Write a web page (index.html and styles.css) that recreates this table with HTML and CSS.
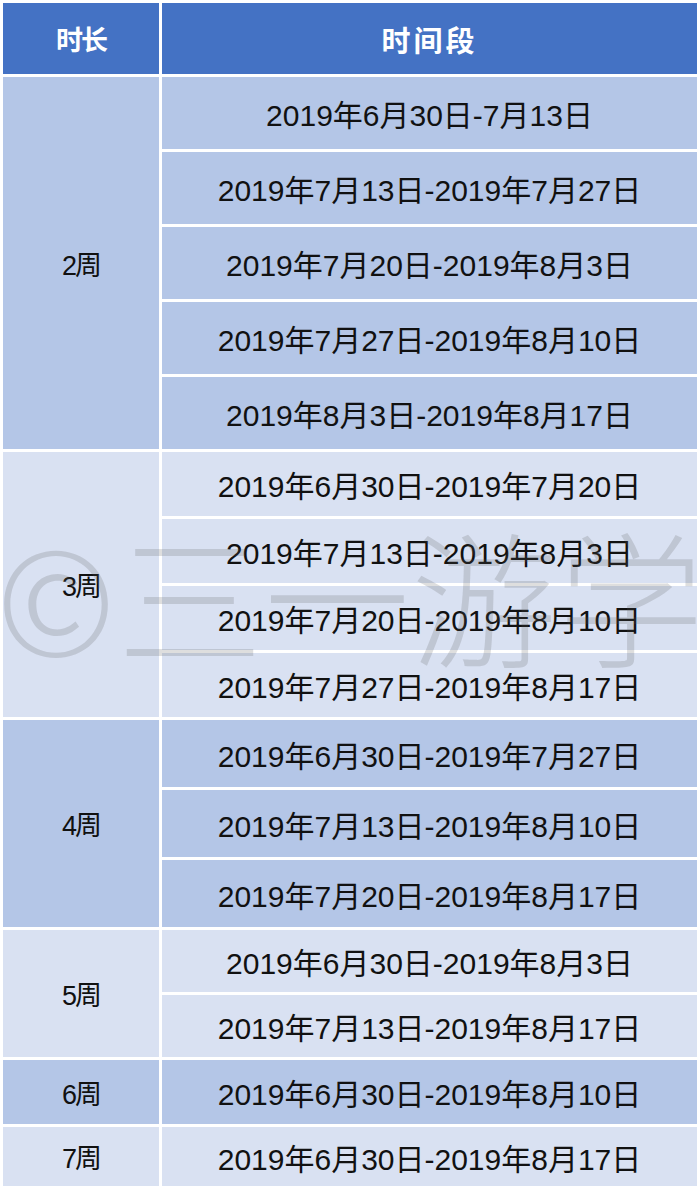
FILE: index.html
```html
<!DOCTYPE html>
<html>
<head>
  <meta charset="utf-8">
  <title>时长与时间段</title>
  <link rel="stylesheet" href="styles.css">
</head>
<body>
  <div class="sheet">
    <table class="schedule">
      <tr class="head">
        <th class="dur">时长</th>
        <th>时间段</th>
      </tr>

      <!-- 2周 -->
      <tr class="dark r2">
        <td class="dur" rowspan="5">2周</td>
        <td>2019年6月30日-7月13日</td>
      </tr>
      <tr class="dark r2"><td>2019年7月13日-2019年7月27日</td></tr>
      <tr class="dark r2"><td>2019年7月20日-2019年8月3日</td></tr>
      <tr class="dark r2"><td>2019年7月27日-2019年8月10日</td></tr>
      <tr class="dark r2"><td>2019年8月3日-2019年8月17日</td></tr>

      <!-- 3周 -->
      <tr class="light r3">
        <td class="dur" rowspan="4">3周</td>
        <td>2019年6月30日-2019年7月20日</td>
      </tr>
      <tr class="light r3"><td>2019年7月13日-2019年8月3日</td></tr>
      <tr class="light r3"><td>2019年7月20日-2019年8月10日</td></tr>
      <tr class="light r3"><td>2019年7月27日-2019年8月17日</td></tr>

      <!-- 4周 -->
      <tr class="dark r4">
        <td class="dur" rowspan="3">4周</td>
        <td>2019年6月30日-2019年7月27日</td>
      </tr>
      <tr class="dark r4"><td>2019年7月13日-2019年8月10日</td></tr>
      <tr class="dark r4"><td>2019年7月20日-2019年8月17日</td></tr>

      <!-- 5周 -->
      <tr class="light r5">
        <td class="dur" rowspan="2">5周</td>
        <td>2019年6月30日-2019年8月3日</td>
      </tr>
      <tr class="light r5"><td>2019年7月13日-2019年8月17日</td></tr>

      <!-- 6周 / 7周 -->
      <tr class="dark r6">
        <td class="dur">6周</td>
        <td>2019年6月30日-2019年8月10日</td>
      </tr>
      <tr class="light r7">
        <td class="dur">7周</td>
        <td>2019年6月30日-2019年8月17日</td>
      </tr>
    </table>

    <div class="watermark" aria-hidden="true">©三一游学</div>
  </div>
</body>
</html>
```

FILE: styles.css
```css
body {
  margin: 0;
  background: #fff;
}

.sheet {
  position: relative;
  width: 700px;
  height: 1190px;
  overflow: hidden;
}

.schedule {
  width: 700px;
  border-collapse: collapse;
  table-layout: fixed;
  font-family: "Liberation Sans", "Noto Sans CJK SC", sans-serif;
  color: #111;
}

.schedule th,
.schedule td {
  border: 3px solid #fff;
  padding: 0;
  text-align: center;
  vertical-align: middle;
  font-size: 30px;
  font-weight: normal;
  letter-spacing: 0;
}

.schedule .dur {
  width: 156px;
  font-size: 27px;
  letter-spacing: -2px;
}

.head th {
  background: #4472c4;
  color: #fff;
  font-family: "Noto Sans CJK SC", sans-serif;
  font-weight: bold;
  font-size: 29px;
  letter-spacing: 3px;
}

.head { height: 74px; }
.r2 { height: 75px; }
.r3 { height: 67px; }
.r4 { height: 70px; }
.r5 { height: 65px; }
.r6 { height: 67px; }
.r7 { height: 62px; }

.dark td { background: #b4c6e7; }
.light td { background: #d9e1f2; }

.watermark {
  position: absolute;
  left: -4px;
  top: 520px;
  font-family: "Noto Sans CJK SC", sans-serif;
  font-weight: 300;
  font-size: 146px;
  line-height: 1;
  letter-spacing: 1px;
  color: rgba(90, 90, 90, 0.2);
  white-space: nowrap;
  pointer-events: none;
}
```
